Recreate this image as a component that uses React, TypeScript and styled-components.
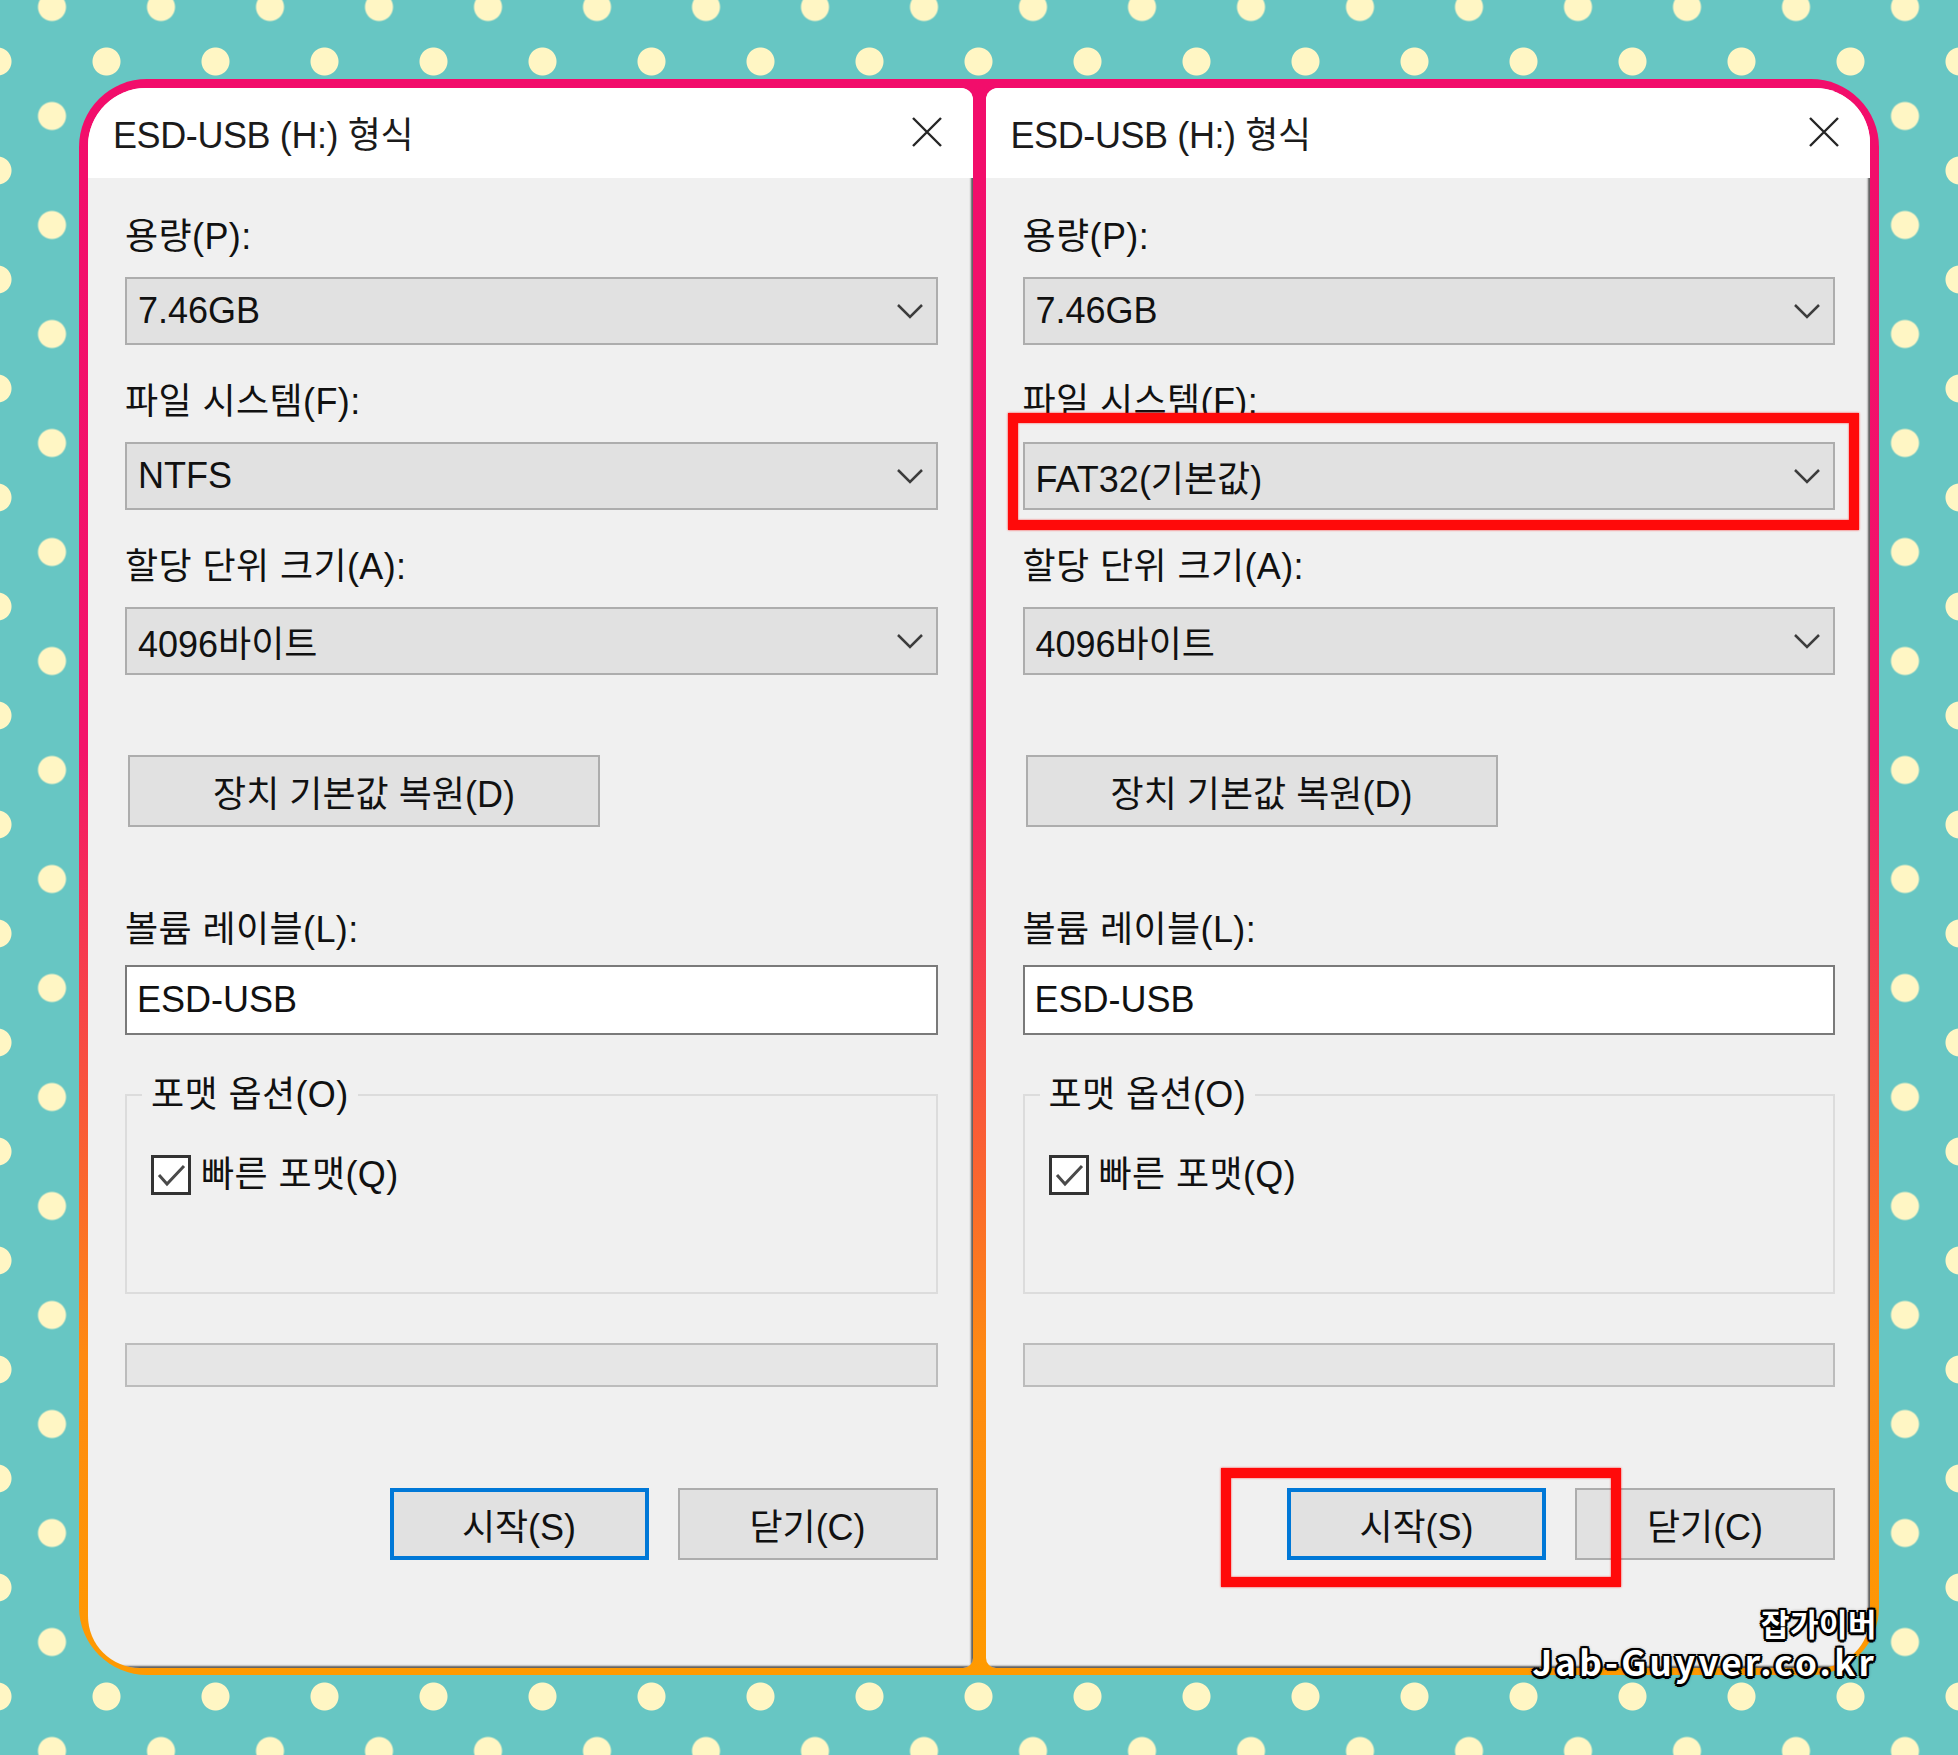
import React from 'react';
import styled, { createGlobalStyle } from 'styled-components';

const GlobalStyle = createGlobalStyle`
  html, body { margin: 0; padding: 0; }
  body { font-family: "Liberation Sans", "Noto Sans CJK KR", sans-serif; }
  * { box-sizing: border-box; }
`;

const dot = 'radial-gradient(circle, #FFF6C4 13.5px, transparent 14.5px)';

const Page = styled.div`
  width: 1958px; height: 1755px; padding: 79px;
  background-color: #67C6C3;
  background-image: ${dot}, ${dot};
  background-size: 109px 109px;
  background-position: -2.5px -47.5px, 52px 7px;
`;

const Frame = styled.div`
  position: relative;
  display: flex; gap: 13px;
  height: 1596px;
  padding: 9px 9px 7px 9px;
  border-radius: 68px;
  background: linear-gradient(180deg, #F20D6B 0%, #F3146A 42%, #F8503F 62%, #FE8A12 80%, #FF9A00 100%);
`;

const Dialog = styled.section<{ $side: 'left' | 'right' }>`
  position: relative;
  flex: 1;
  display: flex; flex-direction: column;
  overflow: hidden;
  background: #F0F0F0;
  border-radius: ${({ $side }) => ($side === 'left' ? '58px 12px 10px 52px' : '12px 55px 52px 10px')};
`;

const TitleBar = styled.header`
  height: 90px; flex: none;
  display: flex; align-items: center; justify-content: space-between;
  padding: 0 30px 2px 25px;
  background: #fff;
`;

const Title = styled.h1`
  margin: 0;
  font-size: 36px; font-weight: 400; color: #1b1b1b;
  letter-spacing: -0.4px;
`;

const Body = styled.div`
  flex: 1;
  display: flex; flex-direction: column;
  padding: 37px 35px 108px 37px;
  box-shadow: inset -3px -3px 2px -1px rgba(55, 55, 55, 0.8);
`;

const Field = styled.div<{ $top: number }>`
  display: flex; flex-direction: column;
  margin-top: ${({ $top }) => $top}px;
`;

const Label = styled.div<{ $gap: number }>`
  font-size: 36px; line-height: 44px; color: #111;
  letter-spacing: 0.4px;
  margin-bottom: ${({ $gap }) => $gap}px;
`;

const Select = styled.div`
  height: 68px;
  display: flex; align-items: center; justify-content: space-between;
  padding: 0 12px 0 11px;
  background: #E1E1E1;
  border: 2px solid #ADADAD;
  font-size: 36px; color: #111;
`;

const TextInput = styled.input`
  height: 70px; width: 100%;
  padding: 0 10px;
  background: #fff;
  border: 2px solid #7A7A7A;
  font: inherit; font-size: 36px; color: #111;
  outline: none;
`;

const Button = styled.button<{ $primary?: boolean; $width: number }>`
  width: ${({ $width }) => $width}px; height: 72px;
  padding: 0;
  background: #E1E1E1;
  border: ${({ $primary }) => ($primary ? '4px solid #0078D7' : '2px solid #ADADAD')};
  font: inherit; font-size: 36px; color: #111;
`;

const ResetButton = styled(Button)`
  margin: 80px 0 0 3px;
  align-self: flex-start;
`;

const Group = styled.fieldset`
  margin: 38px 0 0; min-inline-size: 0;
  padding: 0 24px 97px 24px;
  border: 2px solid #DCDCDC;
`;

const Legend = styled.legend`
  margin-left: -9px;
  padding: 0 9px;
  font-size: 36px; line-height: 44px; color: #111;
  letter-spacing: 0.4px;
`;

const CheckRow = styled.label`
  margin-top: 38px;
  display: flex; align-items: center; gap: 10px;
  font-size: 36px; line-height: 40px; color: #111;
  letter-spacing: 0.4px;
`;

const CheckBox = styled.span`
  width: 40px; height: 40px; flex: none;
  display: flex; align-items: center; justify-content: center;
  background: #fff;
  border: 3px solid #333;
`;

const Progress = styled.div`
  margin-top: 49px;
  height: 44px;
  background: #E6E6E6;
  border: 2px solid #BCBCBC;
`;

const ButtonRow = styled.div`
  margin-top: 101px;
  display: flex; justify-content: flex-end; gap: 29px;
`;

const Highlight = styled.div<{ $x: number; $y: number; $w: number; $h: number }>`
  position: absolute;
  left: ${({ $x }) => $x}px; top: ${({ $y }) => $y}px;
  width: ${({ $w }) => $w}px; height: ${({ $h }) => $h}px;
  border: 10px solid #FF0A0A;
  box-shadow: 0 0 2px rgba(255, 0, 0, 0.8), inset 0 0 2px rgba(255, 0, 0, 0.8);
  pointer-events: none;
`;

const Watermark = styled.div`
  position: absolute; right: 2px; bottom: -5px;
  display: flex; flex-direction: column; align-items: flex-end;
  font-family: "Noto Sans CJK KR", sans-serif; font-weight: 700;
  line-height: 1.12; color: #fff;
  text-shadow:
    2.5px 0 0 #000, -2.5px 0 0 #000, 0 2.5px 0 #000, 0 -2.5px 0 #000,
    1.8px 1.8px 0 #000, -1.8px 1.8px 0 #000, 1.8px -1.8px 0 #000, -1.8px -1.8px 0 #000,
    0 0 4px #000;
`;

const MarkName = styled.span`
  font-size: 31px; letter-spacing: 0.5px;
`;

const MarkUrl = styled.span`
  font-size: 35px; letter-spacing: 3.2px;
`;

const Close = () => (
  <svg width="32" height="32" viewBox="0 0 32 32">
    <path d="M2 2L30 30M30 2L2 30" stroke="#262626" strokeWidth="2.4" fill="none" />
  </svg>
);

const Chevron = () => (
  <svg width="28" height="16" viewBox="0 0 28 16">
    <polyline points="2,2 14,14 26,2" stroke="#3c3c3c" strokeWidth="2.5" fill="none" />
  </svg>
);

const Check = () => (
  <svg width="32" height="32" viewBox="0 0 32 32">
    <polyline points="4,16 12,25 29,7" stroke="#4a4a4a" strokeWidth="3" fill="none" />
  </svg>
);

function FormatDialog({ side, fileSystem }: { side: 'left' | 'right'; fileSystem: string }) {
  return (
    <Dialog $side={side}>
      <TitleBar>
        <Title>ESD-USB (H:) 형식</Title>
        <Close />
      </TitleBar>
      <Body>
        <Field $top={0}>
          <Label $gap={18}>용량(P):</Label>
          <Select>7.46GB<Chevron /></Select>
        </Field>
        <Field $top={35}>
          <Label $gap={18}>파일 시스템(F):</Label>
          <Select>{fileSystem}<Chevron /></Select>
        </Field>
        <Field $top={35}>
          <Label $gap={18}>할당 단위 크기(A):</Label>
          <Select>4096바이트<Chevron /></Select>
        </Field>

        <ResetButton $width={472}>장치 기본값 복원(D)</ResetButton>

        <Field $top={81}>
          <Label $gap={13}>볼륨 레이블(L):</Label>
          <TextInput readOnly defaultValue="ESD-USB" />
        </Field>

        <Group>
          <Legend>포맷 옵션(O)</Legend>
          <CheckRow>
            <CheckBox><Check /></CheckBox>
            빠른 포맷(Q)
          </CheckRow>
        </Group>

        <Progress />

        <ButtonRow>
          <Button $primary $width={259}>시작(S)</Button>
          <Button $width={260}>닫기(C)</Button>
        </ButtonRow>
      </Body>

      {side === 'right' && (
        <>
          <Highlight $x={22} $y={325} $w={851} $h={117} />
          <Highlight $x={235} $y={1380} $w={400} $h={119} />
        </>
      )}
    </Dialog>
  );
}

export default function App() {
  return (
    <>
      <GlobalStyle />
      <Page>
        <Frame>
          <FormatDialog side="left" fileSystem="NTFS" />
          <FormatDialog side="right" fileSystem="FAT32(기본값)" />
          <Watermark>
            <MarkName>잡가이버</MarkName>
            <MarkUrl>Jab-Guyver.co.kr</MarkUrl>
          </Watermark>
        </Frame>
      </Page>
    </>
  );
}
